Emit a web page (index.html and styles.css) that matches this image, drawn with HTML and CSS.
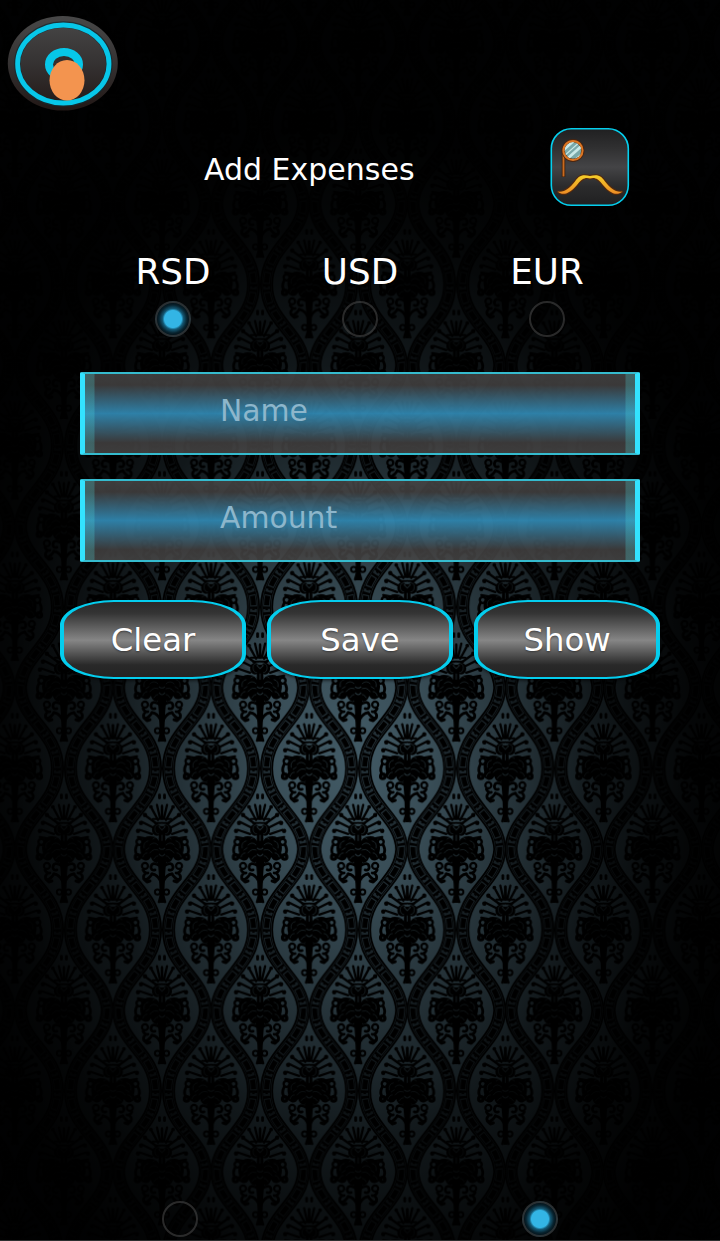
FILE: index.html
```html
<!DOCTYPE html>
<html lang="en">
<head>
<meta charset="utf-8">
<title>Add Expenses</title>
<link rel="stylesheet" href="styles.css">
</head>
<body>
<div class="screen">
  <svg class="wallpaper" width="720" height="1241" aria-hidden="true">
    <defs>
      <g id="half" fill="none" stroke="#000" stroke-linecap="round" stroke-linejoin="round">
        <path d="M2.500 -51V-48" stroke-width="2.8"/>
        <path d="M0 -28V-40M2 -28L5 -41M4 -26L10 -37M5 -22L16 -30M8 -18L20 -24M10 -12L22 -16M8 -6L24 -9" stroke-width="2.3"/>
        <path d="M0 -27H9M0 -23H7" stroke-width="2"/>
        <g fill="#000" stroke="none">
          <circle cx="11" cy="-39" r="1.900"/><circle cx="17" cy="-31" r="2.200"/><circle cx="21" cy="-23" r="2.200"/><circle cx="24" cy="-15" r="2.200"/>
          <ellipse cx="5" cy="-16" rx="5" ry="6"/>
          <path d="M0 8Q1 -6 7 -9Q17 -12 20 -5Q23 0 21 7Q24 12 18 14Q14 16 11 11Q10 16 5 17L0 18Z"/>
        </g>
        <circle cx="22.500" cy="-4" r="3" stroke-width="2.400"/>
        <circle cx="24.500" cy="11" r="2.200" stroke-width="3.200"/>
        <path d="M25 -1Q28 5 25 9M2 20Q10 15 11 21Q11 25 7 24M0 39Q3 29 10 28" stroke-width="2.800"/>
        <circle cx="17" cy="20" r="3" stroke-width="2.200"/>
        <path d="M19 24Q17 28 14 27M10 28Q13 33 17 34Q20 31 17 28" stroke-width="2.700"/>
        <path d="M12 35L15 36L18 33" stroke-width="3"/>
        <circle cx="4.500" cy="46" r="2.600" stroke-width="2"/>
        <path d="M1 49L3 56" stroke-width="2.500"/>
        <g stroke="#30434b" stroke-width=".8" opacity=".7">
          <path d="M2 -21Q7 -22 7 -17T3 -12M3 -7Q6 -10 9 -7M12 -15L17 -17M4 -1Q8 -5 12 -1M2 5Q8 1 12 7M2 10Q6 9 8 13M14 -5Q19 -4 18 2M15 7Q18 7 19 11M2 14L5 17M13 2L16 4"/>
        </g>
      </g>
      <g id="ornament">
        <use href="#half"/>
        <use href="#half" transform="scale(-1 1)"/>
        <path d="M-3 -20H3L4 17L3 30L2 57H-2L-3 30L-4 17Z" fill="#000"/>
        <path d="M0 -22L3 -19L0 -16L-3 -19ZM0 -11V-5M-3 8Q0 12 3 8M-3 2Q0 5 3 2" fill="none" stroke="#33474f" stroke-width="1" opacity=".75"/>
      </g>
      <path id="wave" d="M54.6 -3V0C56 33 91.600 43 91.600 80.6C91.600 118 56 128 54.6 161.300V164"/>
      <g id="ribbon" fill="none">
        <use href="#wave" stroke="#000" stroke-width="13"/>
        <use href="#wave" stroke="#3d5560" stroke-opacity=".55" stroke-width="9.600"/>
        <use href="#wave" stroke="#000" stroke-width="8.400"/>
        <use href="#wave" stroke="#3d5560" stroke-opacity=".6" stroke-width="6.800" stroke-dasharray="12 2.500 3 2.500" stroke-dashoffset="-1"/>
        <use href="#wave" stroke="#000" stroke-width="5" stroke-dasharray="9.500 10.500" stroke-dashoffset="-2.200"/>
        <use href="#wave" stroke="#000" stroke-width="2.400" stroke-dasharray="1.500 18.500" stroke-dashoffset="-15"/>
      </g>
      <pattern id="damask" x="260.1" y="687.8" width="98.1" height="161.3" patternUnits="userSpaceOnUse">
        <use href="#ornament" x="49.05" y="77.500"/>
        <use href="#ornament" x="49.05" y="238.800"/>
        <use href="#ornament" x="0" y="-3.150"/>
        <use href="#ornament" x="98.1" y="-3.150"/>
        <use href="#ornament" x="0" y="158.150"/>
        <use href="#ornament" x="98.1" y="158.150"/>
        <use href="#ribbon"/>
        <use href="#ribbon" transform="translate(98.1 0) scale(-1 1)"/>
      </pattern>
      <radialGradient id="shade" gradientUnits="userSpaceOnUse" cx="0" cy="0" r="1" gradientTransform="translate(350 755) scale(400 630)">
        <stop offset="0" stop-color="#000" stop-opacity="0"/>
        <stop offset=".2" stop-color="#000" stop-opacity=".14"/>
        <stop offset=".4" stop-color="#000" stop-opacity=".42"/>
        <stop offset=".62" stop-color="#000" stop-opacity=".74"/>
        <stop offset=".85" stop-color="#000" stop-opacity=".93"/>
        <stop offset="1" stop-color="#000" stop-opacity=".985"/>
      </radialGradient>
    </defs>
    <rect width="720" height="1241" fill="url(#damask)"/>
    <rect width="720" height="1241" fill="url(#shade)"/>
  </svg>

  <header class="top">
    <svg class="knob" width="112" height="98" viewBox="0 0 112 98" role="img" aria-label="Switch">
      <defs>
        <linearGradient id="metal" x1="0" y1="0" x2="0" y2="1"><stop offset="0" stop-color="#484848"/><stop offset=".5" stop-color="#353232"/><stop offset="1" stop-color="#211715"/></linearGradient>
      </defs>
      <ellipse cx="55.800" cy="49.300" rx="55" ry="47.300" fill="url(#metal)"/>
      <ellipse cx="56.300" cy="50" rx="46" ry="39.500" fill="none" stroke="#172b30" stroke-width="6.500" opacity=".8"/>
      <ellipse cx="56.300" cy="50" rx="45.700" ry="39" fill="none" stroke="#07c7e9" stroke-width="4.800"/>
      <ellipse cx="57" cy="50.500" rx="15" ry="12.500" fill="#332e2e" stroke="#07c7e9" stroke-width="8"/>
      <ellipse cx="60" cy="66.300" rx="17.500" ry="20.300" fill="#f3944f"/>
    </svg>
  </header>

  <div class="heading">
    <h1 class="title">Add Expenses</h1>
    <svg class="logo" width="80" height="80" viewBox="0 0 80 80" role="img" aria-label="Monocle and moustache">
      <defs>
        <linearGradient id="tile" x1="0" y1="0" x2="0" y2="1"><stop offset="0" stop-color="#202021"/><stop offset=".25" stop-color="#303031"/><stop offset=".5" stop-color="#444446"/><stop offset=".75" stop-color="#2b2b2c"/><stop offset="1" stop-color="#202021"/></linearGradient>
        <linearGradient id="gold" x1="0" y1="0" x2="0" y2="1"><stop offset="0" stop-color="#f5cf29"/><stop offset="1" stop-color="#ed8c25"/></linearGradient>
        <clipPath id="lens"><circle cx="23" cy="23.500" r="8.500"/></clipPath>
      </defs>
      <rect x="1.300" y="1.800" width="77" height="76.500" rx="20" fill="url(#tile)" stroke="#05cfee" stroke-width="1.600"/>
      <path d="M13.500 21V50" stroke="#3b1d0c" stroke-width="3.500"/>
      <path d="M13.500 21V49.500" stroke="#c96b20" stroke-width="1.900"/>
      <circle cx="23" cy="23.500" r="9.800" fill="#7aa9a9" stroke="#4b240e" stroke-width="3.200"/>
      <g clip-path="url(#lens)" stroke="#c9e9e7"><path d="M11 25L28 10M17 32L36 15" stroke-width="2.800"/><path d="M14 29L32 13M22 35L36 23" stroke-width="1.200"/></g>
      <circle cx="23" cy="23.500" r="9.600" fill="none" stroke="#db7624" stroke-width="2"/>
      <path d="M7.500 64.500C14 70 21 65 27 58C32 51 36 50 40 51.500C44 50 48 51 53 58C59 65 66 70 72.500 64.500C66 66 60 61 55 54.500C50 46.500 45 48 40 49C35 48 30 46.500 25 54.500C20 61 14 66 7.500 64.500Z" fill="url(#gold)" stroke="#55290d" stroke-width="2.200" paint-order="stroke"/>
    </svg>
  </div>

  <div class="currencies">
    <div class="currency"><span class="code">RSD</span><span class="radio on"></span></div>
    <div class="currency"><span class="code">USD</span><span class="radio"></span></div>
    <div class="currency"><span class="code">EUR</span><span class="radio"></span></div>
  </div>

  <div class="fields">
    <div class="field">Name</div>
    <div class="field">Amount</div>
  </div>

  <div class="actions">
    <div class="button">Clear</div>
    <div class="button">Save</div>
    <div class="button">Show</div>
  </div>

  <footer class="pager">
    <span class="radio"></span>
    <span class="radio on"></span>
  </footer>
</div>
</body>
</html>
```

FILE: styles.css
```css
* { box-sizing: border-box; }

body {
  margin: 0;
  background: #000;
  color: #fff;
  font-family: "DejaVu Sans", sans-serif;
}

.screen {
  position: relative;
  z-index: 0;
  display: flex;
  flex-direction: column;
  width: 720px;
  height: 1241px;
  overflow: hidden;
  background: #425a65;
  border-bottom: 1px solid #2c2e2f;
}

.wallpaper {
  position: absolute;
  inset: 0;
  z-index: -1;
}

.top { height: 127px; padding: 14px 0 0 7px; }
.knob, .logo { display: block; }

.heading {
  display: flex;
  align-items: center;
  justify-content: space-between;
  height: 80px;
  padding: 0 90px 0 204px;
}

.title {
  margin: 0;
  padding-top: 6px;
  font-size: 30px;
  font-weight: 400;
  line-height: 36px;
}

.currencies {
  display: grid;
  grid-template-columns: repeat(3, 187px);
  margin: 44px 0 0 80px;
}

.currency {
  display: flex;
  flex-direction: column;
  align-items: center;
  width: 186px;
}

.code { font-size: 35.7px; line-height: 42px; }

.radio {
  width: 36px;
  height: 36px;
  margin-top: 8px;
  border: 2px solid rgba(75, 75, 75, 0.55);
  border-radius: 50%;
}

.currency .radio { position: relative; left: -0.5px; }

.radio.on {
  background: radial-gradient(circle, #33b5e5 0 8.5px, rgba(25, 110, 145, 0.8) 10.5px, rgba(10, 45, 60, 0.75) 14px, rgba(5, 20, 28, 0.7) 17px);
}

.fields {
  display: flex;
  flex-direction: column;
  gap: 24px;
  margin: 35px 80px 0;
}

.field {
  height: 83px;
  padding: 19px 0 0 135px;
  border: 2px solid #35bbce;
  border-width: 2px 5px;
  border-color: #35bbce #33e3ff;
  border-radius: 2px;
  color: #8db6cb;
  font-size: 29.8px;
  line-height: 36px;
  background:
    linear-gradient(90deg, rgba(80, 225, 230, 0.25) 0 9px, transparent 10px 540px, rgba(80, 225, 230, 0.25) 541px),
    linear-gradient(rgba(70, 70, 70, 0.86), rgba(66, 64, 64, 0.88) 14%, rgba(49, 137, 179, 0.93) 50%, rgba(66, 64, 64, 0.88) 87%, rgba(70, 70, 70, 0.86));
}

.actions {
  display: grid;
  grid-template-columns: repeat(3, 186px);
  justify-content: space-between;
  margin: 38px 60px 0;
}

.button {
  height: 79px;
  border: solid #04cdee;
  border-width: 2px 4px;
  border-radius: 54px / 25px;
  background: linear-gradient(#292929, #343434 15%, #868686 51%, #292929 84%, #242424);
  box-shadow: 0 2px 3px rgba(0, 0, 0, 0.5);
  font-size: 32.3px;
  line-height: 77px;
  text-align: center;
  text-shadow: 0 1px 2px rgba(0, 0, 0, 0.4);
}

.pager {
  display: grid;
  grid-template-columns: 1fr 1fr;
  justify-items: center;
  margin-top: auto;
  padding-bottom: 3px;
}
```
